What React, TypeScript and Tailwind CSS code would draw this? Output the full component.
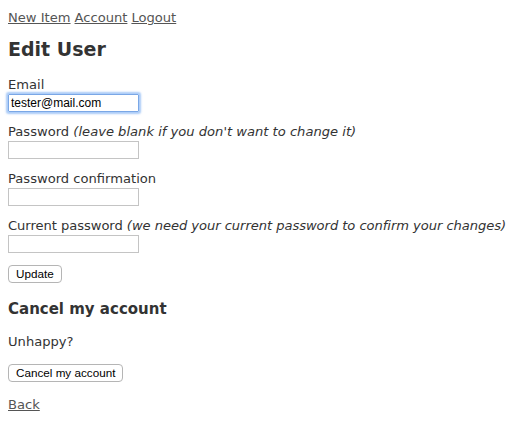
import React from 'react';

export default function App() {
  return (
    <div className="min-h-screen bg-white px-2 pt-[9px] font-['DejaVu_Sans','Verdana',sans-serif] text-[13.1px] leading-[18px] text-[#333]">
      {/* Top nav */}
      <div className="flex gap-[4px]">
        <a href="#" className="text-[#555] underline">New Item</a>
        <a href="#" className="text-[#555] underline">Account</a>
        <a href="#" className="text-[#555] underline">Logout</a>
      </div>

      <h1 className="mt-[10px] text-[19px] font-bold leading-[24px]">Edit User</h1>

      <form className="flex flex-col items-start" onSubmit={e => e.preventDefault()}>
        <label className="mt-[15px]">Email</label>
        <input
          type="email"
          defaultValue="tester@mail.com"
          className="h-[18px] w-[131px] rounded-[1px] border border-[#7aa7e6] px-[2px] font-['Liberation_Sans',Arial,sans-serif] text-[12px] text-black shadow-[0_0_2px_2px_rgba(100,160,240,0.55)] outline-none"
        />

        <label className="mt-[11px]">
          Password <em>(leave blank if you don't want to change it)</em>
        </label>
        <input type="password" className="h-[18px] w-[131px] border border-[#c4c4c4] outline-none" />

        <label className="mt-[11px]">Password confirmation</label>
        <input type="password" className="h-[18px] w-[131px] border border-[#c4c4c4] outline-none" />

        <label className="mt-[11px] whitespace-nowrap tracking-[-0.05px]">
          Current password <em>(we need your current password to confirm your changes)</em>
        </label>
        <input type="password" className="h-[18px] w-[131px] border border-[#c4c4c4] outline-none" />

        <button
          type="submit"
          className="mt-[12px] h-[18px] rounded-[4px] border border-[#b5b5b5] bg-white px-[7px] font-['Liberation_Sans',Arial,sans-serif] text-[11.7px] leading-[16px] text-black"
        >
          Update
        </button>
      </form>

      <h3 className="mt-[16px] text-[15px] font-bold leading-[20px]">Cancel my account</h3>

      <p className="mt-[14px]">Unhappy?</p>

      <button
        type="button"
        className="mt-[13px] h-[18px] rounded-[4px] border border-[#b5b5b5] bg-white px-[7px] font-['Liberation_Sans',Arial,sans-serif] text-[11.7px] leading-[16px] text-black"
      >
        Cancel my account
      </button>

      <div className="mt-[14px]">
        <a href="#" className="text-[#555] underline">Back</a>
      </div>
    </div>
  );
}
